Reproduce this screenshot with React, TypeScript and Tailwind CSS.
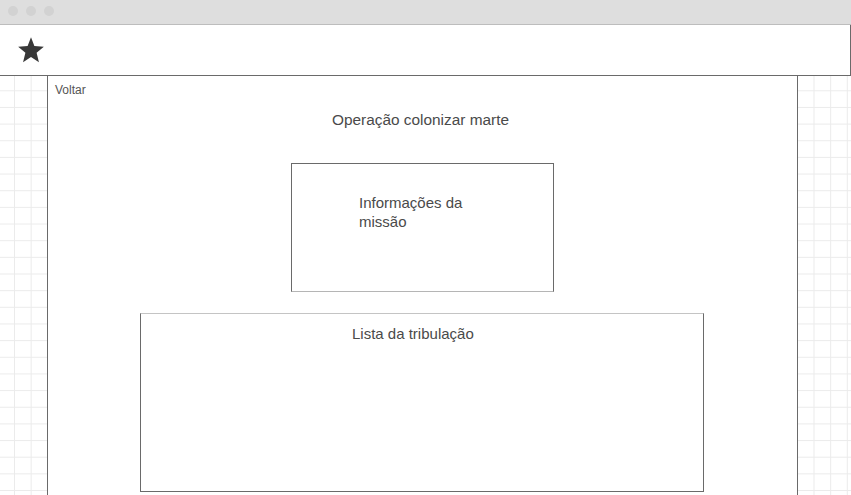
import React from "react";

export default function App() {
  return (
    <div
      className="w-[851px] h-[495px] overflow-hidden flex flex-col bg-white bg-[linear-gradient(to_right,#ebebeb_1px,transparent_1px),linear-gradient(to_bottom,#ebebeb_1px,transparent_1px)] bg-[length:16.667px_16.667px] bg-[position:14px_7px] text-[#4a4a4a]"
      style={{ fontFamily: '"Liberation Sans", Arial, sans-serif' }}
    >
      {/* window chrome */}
      <div className="h-[25px] shrink-0 bg-[#dedede] border-b border-[#bdbdbd] flex items-center gap-2 pl-2 pb-[2px]">
        <span className="w-[10px] h-[10px] rounded-full bg-[#d2d2d2]" />
        <span className="w-[10px] h-[10px] rounded-full bg-[#d2d2d2]" />
        <span className="w-[10px] h-[10px] rounded-full bg-[#d2d2d2]" />
      </div>

      {/* header */}
      <div className="h-[51px] shrink-0 bg-white border-b border-r border-[#6a6a6a] flex items-center pl-[17px]">
        <svg width="28" height="28" viewBox="0 0 24 24">
          <polygon
            points="12,1 14.9,8.6 23,9.2 16.8,14.4 18.8,22.4 12,18 5.2,22.4 7.2,14.4 1,9.2 9.1,8.6"
            fill="#383838"
          />
        </svg>
      </div>

      {/* main panel */}
      <div className="flex-1 flex">
        <div className="ml-[47px] w-[751px] bg-white border-l border-r border-[#6a6a6a] flex flex-col">
          <div className="pl-[7px] pt-[7px] text-[12px] leading-[14px] text-[#555]">Voltar</div>
          <div className="mt-[14px] pr-[4px] text-center text-[15.4px] leading-[17px] text-[#4a4a4a]">
            Operação colonizar marte
          </div>
          <div className="mt-[35px] self-center w-[263px] h-[129px] border border-[#6a6a6a] border-b-[#b5b5b5] pl-[67px] pt-[29px] text-[15px] leading-[19px]">
            Informações da
            <br />
            missão
          </div>
          <div className="mt-[21px] ml-[92px] w-[564px] h-[179px] border border-[#6a6a6a] border-t-[#c4c4c4] pt-[11px] pl-[211px] text-[15px] leading-[17px]">
            Lista da tribulação
          </div>
        </div>
      </div>
    </div>
  );
}
